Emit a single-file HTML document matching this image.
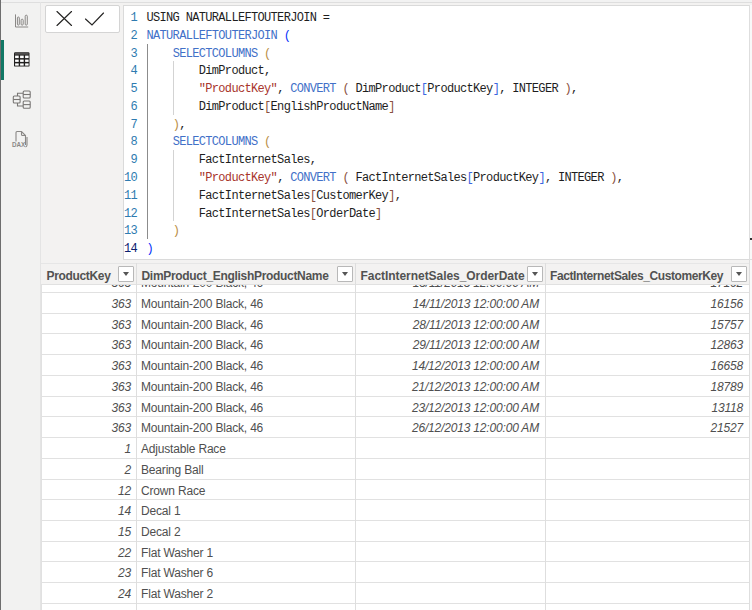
<!DOCTYPE html>
<html><head><meta charset="utf-8"><style>
*{margin:0;padding:0;box-sizing:border-box}
html,body{width:752px;height:610px;overflow:hidden;background:#f3f2f1;position:relative;font-family:"Liberation Sans",sans-serif}
.abs{position:absolute}
#leftline{position:absolute;left:0;top:0;width:1px;height:610px;background:#6e6e6e}
#topband{position:absolute;left:1px;top:0;width:751px;height:2px;background:#f2f2f2}
#topline{position:absolute;left:1px;top:2px;width:751px;height:1px;background:#dedede}
#side{position:absolute;left:1px;top:3px;width:39px;height:607px;background:#f2f2f1}
#sideline{position:absolute;left:40px;top:2px;width:1px;height:608px;background:#e4e4e4}
#teal{position:absolute;left:1px;top:40px;width:3px;height:40px;background:#117865}
#btnbox{position:absolute;left:45px;top:5px;width:75px;height:28px;background:#fff;border:1px solid #d4d4d4;border-radius:2px}
#editor{position:absolute;left:123px;top:5px;width:627px;height:255px;background:#fff;border:1px solid #dadada;border-right:1px solid #dcdcdc}
.ln{position:absolute;left:123px;width:14px;text-align:right;font-family:"Liberation Mono",monospace;font-size:12px;line-height:17.77px;color:#2e7bb0;letter-spacing:-0.67px}
.ln.act{color:#0b216f}
.cl{position:absolute;left:146.5px;white-space:pre;font-family:"Liberation Mono",monospace;font-size:12px;line-height:17.77px;color:#1e1e1e;letter-spacing:-0.67px}
.f{color:#4270c8}
.s{color:#a8352c}
.b1{color:#0431fa}
.b2{color:#b98d45}
.b3{color:#8a5040}
.br{color:#3a66e0}
.g1{position:absolute;width:1px;background:#8c8c8c}
.g2{position:absolute;width:1px;background:#d3d3d3}
#scrolldash{position:absolute;left:750px;top:238px;width:2px;height:2px;background:#333}
#tbl{position:absolute;left:41px;top:264px;width:709px;height:346px;background:#fff;border-left:1px solid #e1e1e1}
#hdr{position:absolute;left:41px;top:263px;width:709px;height:22px;background:#f3f2f1;border-top:1px solid #e6e6e6;border-bottom:1px solid #e1e1e1}
.row{position:absolute;left:41px;width:708px;height:20.73px}
.c{position:absolute;top:2px;height:20.73px;line-height:20.73px;font-size:12px;color:#4f4f4f;white-space:nowrap;letter-spacing:-0.18px}
.c1{left:0;width:95px;text-align:right;padding-right:5px;font-style:italic}
.c2{left:100px;width:214px;}
.c3{left:314px;width:190px;text-align:right;padding-right:6px;font-style:italic}
.c4{left:504px;width:204px;text-align:right;padding-right:6px;font-style:italic}
.hl{position:absolute;left:41px;width:708px;height:1px;background:#e1e1e1}
.vl{position:absolute;top:263px;width:1px;height:347px;background:#dedede}
.h{position:absolute;top:265.6px;height:21px;line-height:21px;font-size:12px;font-weight:bold;color:#525252;white-space:nowrap}
.dd{position:absolute;top:266px;width:16px;height:16px;background:#fff;border:1px solid #b8b8b8;border-radius:1px}
.dd:after{content:"";position:absolute;left:4px;top:5px;border-left:3px solid transparent;border-right:3px solid transparent;border-top:4px solid #555}
</style></head><body>
<div id="leftline"></div>
<div id="topband"></div>
<div id="side"></div>
<div id="topline"></div>
<div id="sideline"></div>
<div id="teal"></div>
<svg class="abs" style="left:0;top:0" width="41" height="160" viewBox="0 0 41 160">
 <g fill="none" stroke="#8a8886" stroke-width="1">
  <path d="M15.5 14.4 V27 H28.2"/>
  <rect x="17.4" y="17" width="1.9" height="8.1" rx="0.95"/>
  <rect x="21.1" y="19.2" width="2.1" height="5.9" rx="1"/>
  <rect x="25.2" y="15.2" width="2.1" height="9.9" rx="1"/>
 </g>
 <rect x="14" y="52.2" width="15.5" height="14.4" rx="1.2" fill="#201f1e"/>
 <rect x="15" y="53.6" width="13.6" height="0.7" fill="#9a9a9a"/>
 <g fill="#fff">
  <rect x="15.1" y="55.6" width="3.6" height="2.5"/><rect x="20.1" y="55.6" width="3.6" height="2.5"/><rect x="25.1" y="55.6" width="3.5" height="2.5"/>
  <rect x="15.1" y="59.6" width="3.6" height="2.3"/><rect x="20.1" y="59.6" width="3.6" height="2.3"/><rect x="25.1" y="59.6" width="3.5" height="2.3"/>
  <rect x="15.1" y="63.4" width="3.6" height="2.2"/><rect x="20.1" y="63.4" width="3.6" height="2.2"/><rect x="25.1" y="63.4" width="3.5" height="2.2"/>
 </g>
 <g fill="none" stroke="#797775" stroke-width="1.1">
  <rect x="13.3" y="96" width="6.8" height="7" rx="1"/>
  <path d="M13.3 99.5 H20.1"/>
  <rect x="23.2" y="91" width="7" height="7" rx="1"/>
  <path d="M23.2 94.5 H30.2"/>
  <rect x="23.2" y="101" width="7" height="7.2" rx="1"/>
  <path d="M23.2 104.6 H30.2"/>
  <path d="M17.5 96 V93.3 H23.2 M17.5 103 V106 H23.2"/>
 </g>
 <g fill="none" stroke="#8a8886" stroke-width="1.1">
  <path d="M16 141.5 V132.5 Q16 131.5 17 131.5 H21.5 L25.5 135.5 V145"/>
  <path d="M21.5 131.8 V134.5 Q21.5 135.5 22.5 135.5 H25.3"/>
  <path d="M27 137 V145 Q27 146.5 25.5 147"/>
 </g>
 <text x="12" y="147.3" font-family="Liberation Sans" font-size="6.3" font-weight="bold" fill="#8a8886">DAX</text>
</svg>
<div id="btnbox"></div>
<svg class="abs" style="left:46px;top:6px" width="74" height="27" viewBox="0 0 74 27">
 <g stroke="#252423" stroke-width="1.15" fill="none" stroke-linecap="round">
  <path d="M11 5.5 L25.5 19.5 M25.5 5.5 L11 19.5"/>
  <path d="M39.5 13 L46 19 L57.5 7"/>
 </g>
</svg>
<div id="editor"></div>
<div class="g1" style="left:147px;top:43.64px;height:195.47px"></div><div class="g2" style="left:173px;top:61.41px;height:53.31px"></div><div class="g2" style="left:173px;top:150.26px;height:71.08px"></div>
<div class="ln" style="top:10.10px">1</div><div class="cl" style="top:10.10px">USING NATURALLEFTOUTERJOIN =</div><div class="ln" style="top:27.87px">2</div><div class="cl" style="top:27.87px"><span class="f">NATURALLEFTOUTERJOIN</span> <span class="b1">(</span></div><div class="ln" style="top:45.64px">3</div><div class="cl" style="top:45.64px">    <span class="f">SELECTCOLUMNS</span> <span class="b2">(</span></div><div class="ln" style="top:63.41px">4</div><div class="cl" style="top:63.41px">        DimProduct,</div><div class="ln" style="top:81.18px">5</div><div class="cl" style="top:81.18px">        <span class="s">&quot;ProductKey&quot;</span>, <span class="f">CONVERT</span> <span class="b3">(</span> DimProduct<span class="br">[</span>ProductKey<span class="br">]</span>, INTEGER <span class="b3">)</span>,</div><div class="ln" style="top:98.95px">6</div><div class="cl" style="top:98.95px">        DimProduct<span class="b3">[</span>EnglishProductName<span class="b3">]</span></div><div class="ln" style="top:116.72px">7</div><div class="cl" style="top:116.72px">    <span class="b2">)</span>,</div><div class="ln" style="top:134.49px">8</div><div class="cl" style="top:134.49px">    <span class="f">SELECTCOLUMNS</span> <span class="b2">(</span></div><div class="ln" style="top:152.26px">9</div><div class="cl" style="top:152.26px">        FactInternetSales,</div><div class="ln" style="top:170.03px">10</div><div class="cl" style="top:170.03px">        <span class="s">&quot;ProductKey&quot;</span>, <span class="f">CONVERT</span> <span class="b3">(</span> FactInternetSales<span class="br">[</span>ProductKey<span class="br">]</span>, INTEGER <span class="b3">)</span>,</div><div class="ln" style="top:187.80px">11</div><div class="cl" style="top:187.80px">        FactInternetSales<span class="b3">[</span>CustomerKey<span class="b3">]</span>,</div><div class="ln" style="top:205.57px">12</div><div class="cl" style="top:205.57px">        FactInternetSales<span class="b3">[</span>OrderDate<span class="b3">]</span></div><div class="ln" style="top:223.34px">13</div><div class="cl" style="top:223.34px">    <span class="b2">)</span></div><div class="ln act" style="top:241.11px">14</div><div class="cl" style="top:241.11px"><span class="b1">)</span></div>
<div style="position:absolute;left:750px;top:5px;width:2px;height:605px;background:#f8f8f8"></div>
<div style="position:absolute;left:749px;top:5px;width:1px;height:605px;background:#dedede"></div>
<div style="position:absolute;left:750px;top:259px;width:2px;height:1px;background:#dcdcdc"></div>
<div id="scrolldash"></div>
<div id="tbl"></div>
<div class="row" style="top:271.27px"><div class="c c1">363</div><div class="c c2">Mountain-200 Black, 46</div><div class="c c3">13/11/2013 12:00:00 AM</div><div class="c c4">17162</div></div><div class="hl" style="top:292px"></div><div class="row" style="top:292.00px"><div class="c c1">363</div><div class="c c2">Mountain-200 Black, 46</div><div class="c c3">14/11/2013 12:00:00 AM</div><div class="c c4">16156</div></div><div class="hl" style="top:313px"></div><div class="row" style="top:312.73px"><div class="c c1">363</div><div class="c c2">Mountain-200 Black, 46</div><div class="c c3">28/11/2013 12:00:00 AM</div><div class="c c4">15757</div></div><div class="hl" style="top:333px"></div><div class="row" style="top:333.46px"><div class="c c1">363</div><div class="c c2">Mountain-200 Black, 46</div><div class="c c3">29/11/2013 12:00:00 AM</div><div class="c c4">12863</div></div><div class="hl" style="top:354px"></div><div class="row" style="top:354.19px"><div class="c c1">363</div><div class="c c2">Mountain-200 Black, 46</div><div class="c c3">14/12/2013 12:00:00 AM</div><div class="c c4">16658</div></div><div class="hl" style="top:375px"></div><div class="row" style="top:374.92px"><div class="c c1">363</div><div class="c c2">Mountain-200 Black, 46</div><div class="c c3">21/12/2013 12:00:00 AM</div><div class="c c4">18789</div></div><div class="hl" style="top:396px"></div><div class="row" style="top:395.65px"><div class="c c1">363</div><div class="c c2">Mountain-200 Black, 46</div><div class="c c3">23/12/2013 12:00:00 AM</div><div class="c c4">13118</div></div><div class="hl" style="top:416px"></div><div class="row" style="top:416.38px"><div class="c c1">363</div><div class="c c2">Mountain-200 Black, 46</div><div class="c c3">26/12/2013 12:00:00 AM</div><div class="c c4">21527</div></div><div class="hl" style="top:437px"></div><div class="row" style="top:437.11px"><div class="c c1">1</div><div class="c c2">Adjustable Race</div><div class="c c3"></div><div class="c c4"></div></div><div class="hl" style="top:458px"></div><div class="row" style="top:457.84px"><div class="c c1">2</div><div class="c c2">Bearing Ball</div><div class="c c3"></div><div class="c c4"></div></div><div class="hl" style="top:479px"></div><div class="row" style="top:478.57px"><div class="c c1">12</div><div class="c c2">Crown Race</div><div class="c c3"></div><div class="c c4"></div></div><div class="hl" style="top:499px"></div><div class="row" style="top:499.30px"><div class="c c1">14</div><div class="c c2">Decal 1</div><div class="c c3"></div><div class="c c4"></div></div><div class="hl" style="top:520px"></div><div class="row" style="top:520.03px"><div class="c c1">15</div><div class="c c2">Decal 2</div><div class="c c3"></div><div class="c c4"></div></div><div class="hl" style="top:541px"></div><div class="row" style="top:540.76px"><div class="c c1">22</div><div class="c c2">Flat Washer 1</div><div class="c c3"></div><div class="c c4"></div></div><div class="hl" style="top:561px"></div><div class="row" style="top:561.49px"><div class="c c1">23</div><div class="c c2">Flat Washer 6</div><div class="c c3"></div><div class="c c4"></div></div><div class="hl" style="top:582px"></div><div class="row" style="top:582.22px"><div class="c c1">24</div><div class="c c2">Flat Washer 2</div><div class="c c3"></div><div class="c c4"></div></div><div class="hl" style="top:603px"></div><div class="row" style="top:602.95px"><div class="c c1"></div><div class="c c2"></div><div class="c c3"></div><div class="c c4"></div></div><div class="hl" style="top:624px"></div>
<div id="hdr"></div>
<div class="vl" style="left:136px"></div>
<div class="vl" style="left:355px"></div>
<div class="vl" style="left:545px"></div>
<div class="vl" style="left:749px"></div>
<div class="h" style="left:46.5px;letter-spacing:-0.33px">ProductKey</div>
<div class="dd" style="left:118px"></div>
<div class="h" style="left:141.5px;letter-spacing:-0.31px">DimProduct_EnglishProductName</div>
<div class="dd" style="left:337px"></div>
<div class="h" style="left:360.5px;letter-spacing:-0.05px">FactInternetSales_OrderDate</div>
<div class="dd" style="left:527px"></div>
<div class="h" style="left:550px;letter-spacing:-0.4px">FactInternetSales_CustomerKey</div>
<div class="dd" style="left:731px"></div>
</body></html>
